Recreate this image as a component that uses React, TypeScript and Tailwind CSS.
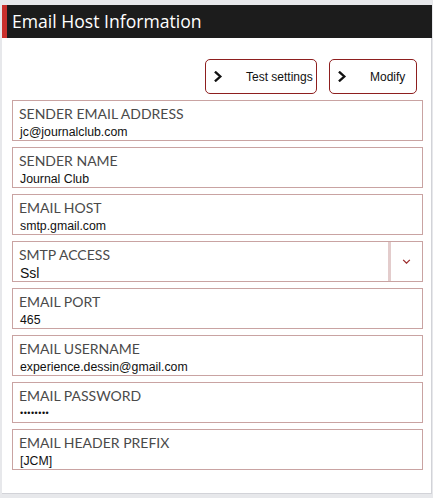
const fields = [
  { label: "Sender email address", value: "jc@journalclub.com" },
  { label: "Sender name", value: "Journal Club" },
  { label: "Email host", value: "smtp.gmail.com" },
  { label: "SMTP access", value: "Ssl", select: true },
  { label: "Email port", value: "465" },
  { label: "Email username", value: "experience.dessin@gmail.com" },
  { label: "Email password", value: "••••••••", password: true },
  { label: "Email header prefix", value: "[JCM]" },
]

function Chevron() {
  return (
    <svg viewBox="0 0 10 12" className="h-[11px] w-[9px]" fill="none" stroke="#111" strokeWidth={2.6} strokeLinecap="square">
      <polyline points="2,1.5 7,6 2,10.5" />
    </svg>
  )
}

function ActionButton({ label, width }: { label: string; width: string }) {
  return (
    <button
      className={`flex h-[35px] ${width} items-center rounded-[5px] border border-[#8e1f1f] bg-white pl-[8px] font-['Liberation_Sans',Arial,sans-serif] text-[12px] text-[#111]`}
    >
      <Chevron />
      <span className="ml-[23px]">{label}</span>
    </button>
  )
}

function Field({ label, value, select, password }: { label: string; value: string; select?: boolean; password?: boolean }) {
  return (
    <div className="flex h-[41px] border border-[#c9a3a2] bg-white">
      <div className="flex flex-1 flex-col pl-[6px] pt-[5px]">
        <span className="font-['Lato',sans-serif] text-[14px] leading-[16px] text-[#4a4a4a] uppercase">{label}</span>
        <span
          className={`font-['Liberation_Sans',Arial,sans-serif] text-[#111] ${
            select
              ? "mt-[2px] pl-[1px] text-[14px] leading-[16px]"
              : password
                ? "mt-[1px] pl-[1px] text-[9px] tracking-[0.5px] leading-[16px]"
                : "mt-[3px] pl-[1px] text-[12.3px] leading-[14px]"
          }`}
        >
          {value}
        </span>
      </div>
      {select && (
        <div className="flex w-[34px] items-center justify-center border-l-[3px] border-[#e3cccc]">
          <svg viewBox="0 0 10 6" className="h-[5px] w-[9px]" fill="none" stroke="#9b2a2a" strokeWidth={1.5}>
            <polyline points="1,1 5,5 9,1" />
          </svg>
        </div>
      )}
    </div>
  )
}

export default function App() {
  return (
    <div className="min-h-screen bg-[#e7e8eb] pl-[2px] pr-[1px] pt-[5px]">
      <div className="w-[430px]">
        <div className="flex h-[33px] items-center border-l-[5px] border-[#c9302c] bg-[#1c1c1c] pl-[5px] font-['Open_Sans',sans-serif] text-[17.6px] text-white">
          Email Host Information
        </div>
        <div className="h-[456px] border-b border-r border-[#d2d3d8] bg-white pl-[10px] pr-[8px]">
          <div className="flex justify-end gap-[12px] pr-[6px] pt-[21px] pb-[6px]">
            <ActionButton label="Test settings" width="w-[112px]" />
            <ActionButton label="Modify" width="w-[88px]" />
          </div>
          <div className="flex flex-col gap-[6px]">
            {fields.map((f) => (
              <Field key={f.label} {...f} />
            ))}
          </div>
        </div>
      </div>
    </div>
  )
}
